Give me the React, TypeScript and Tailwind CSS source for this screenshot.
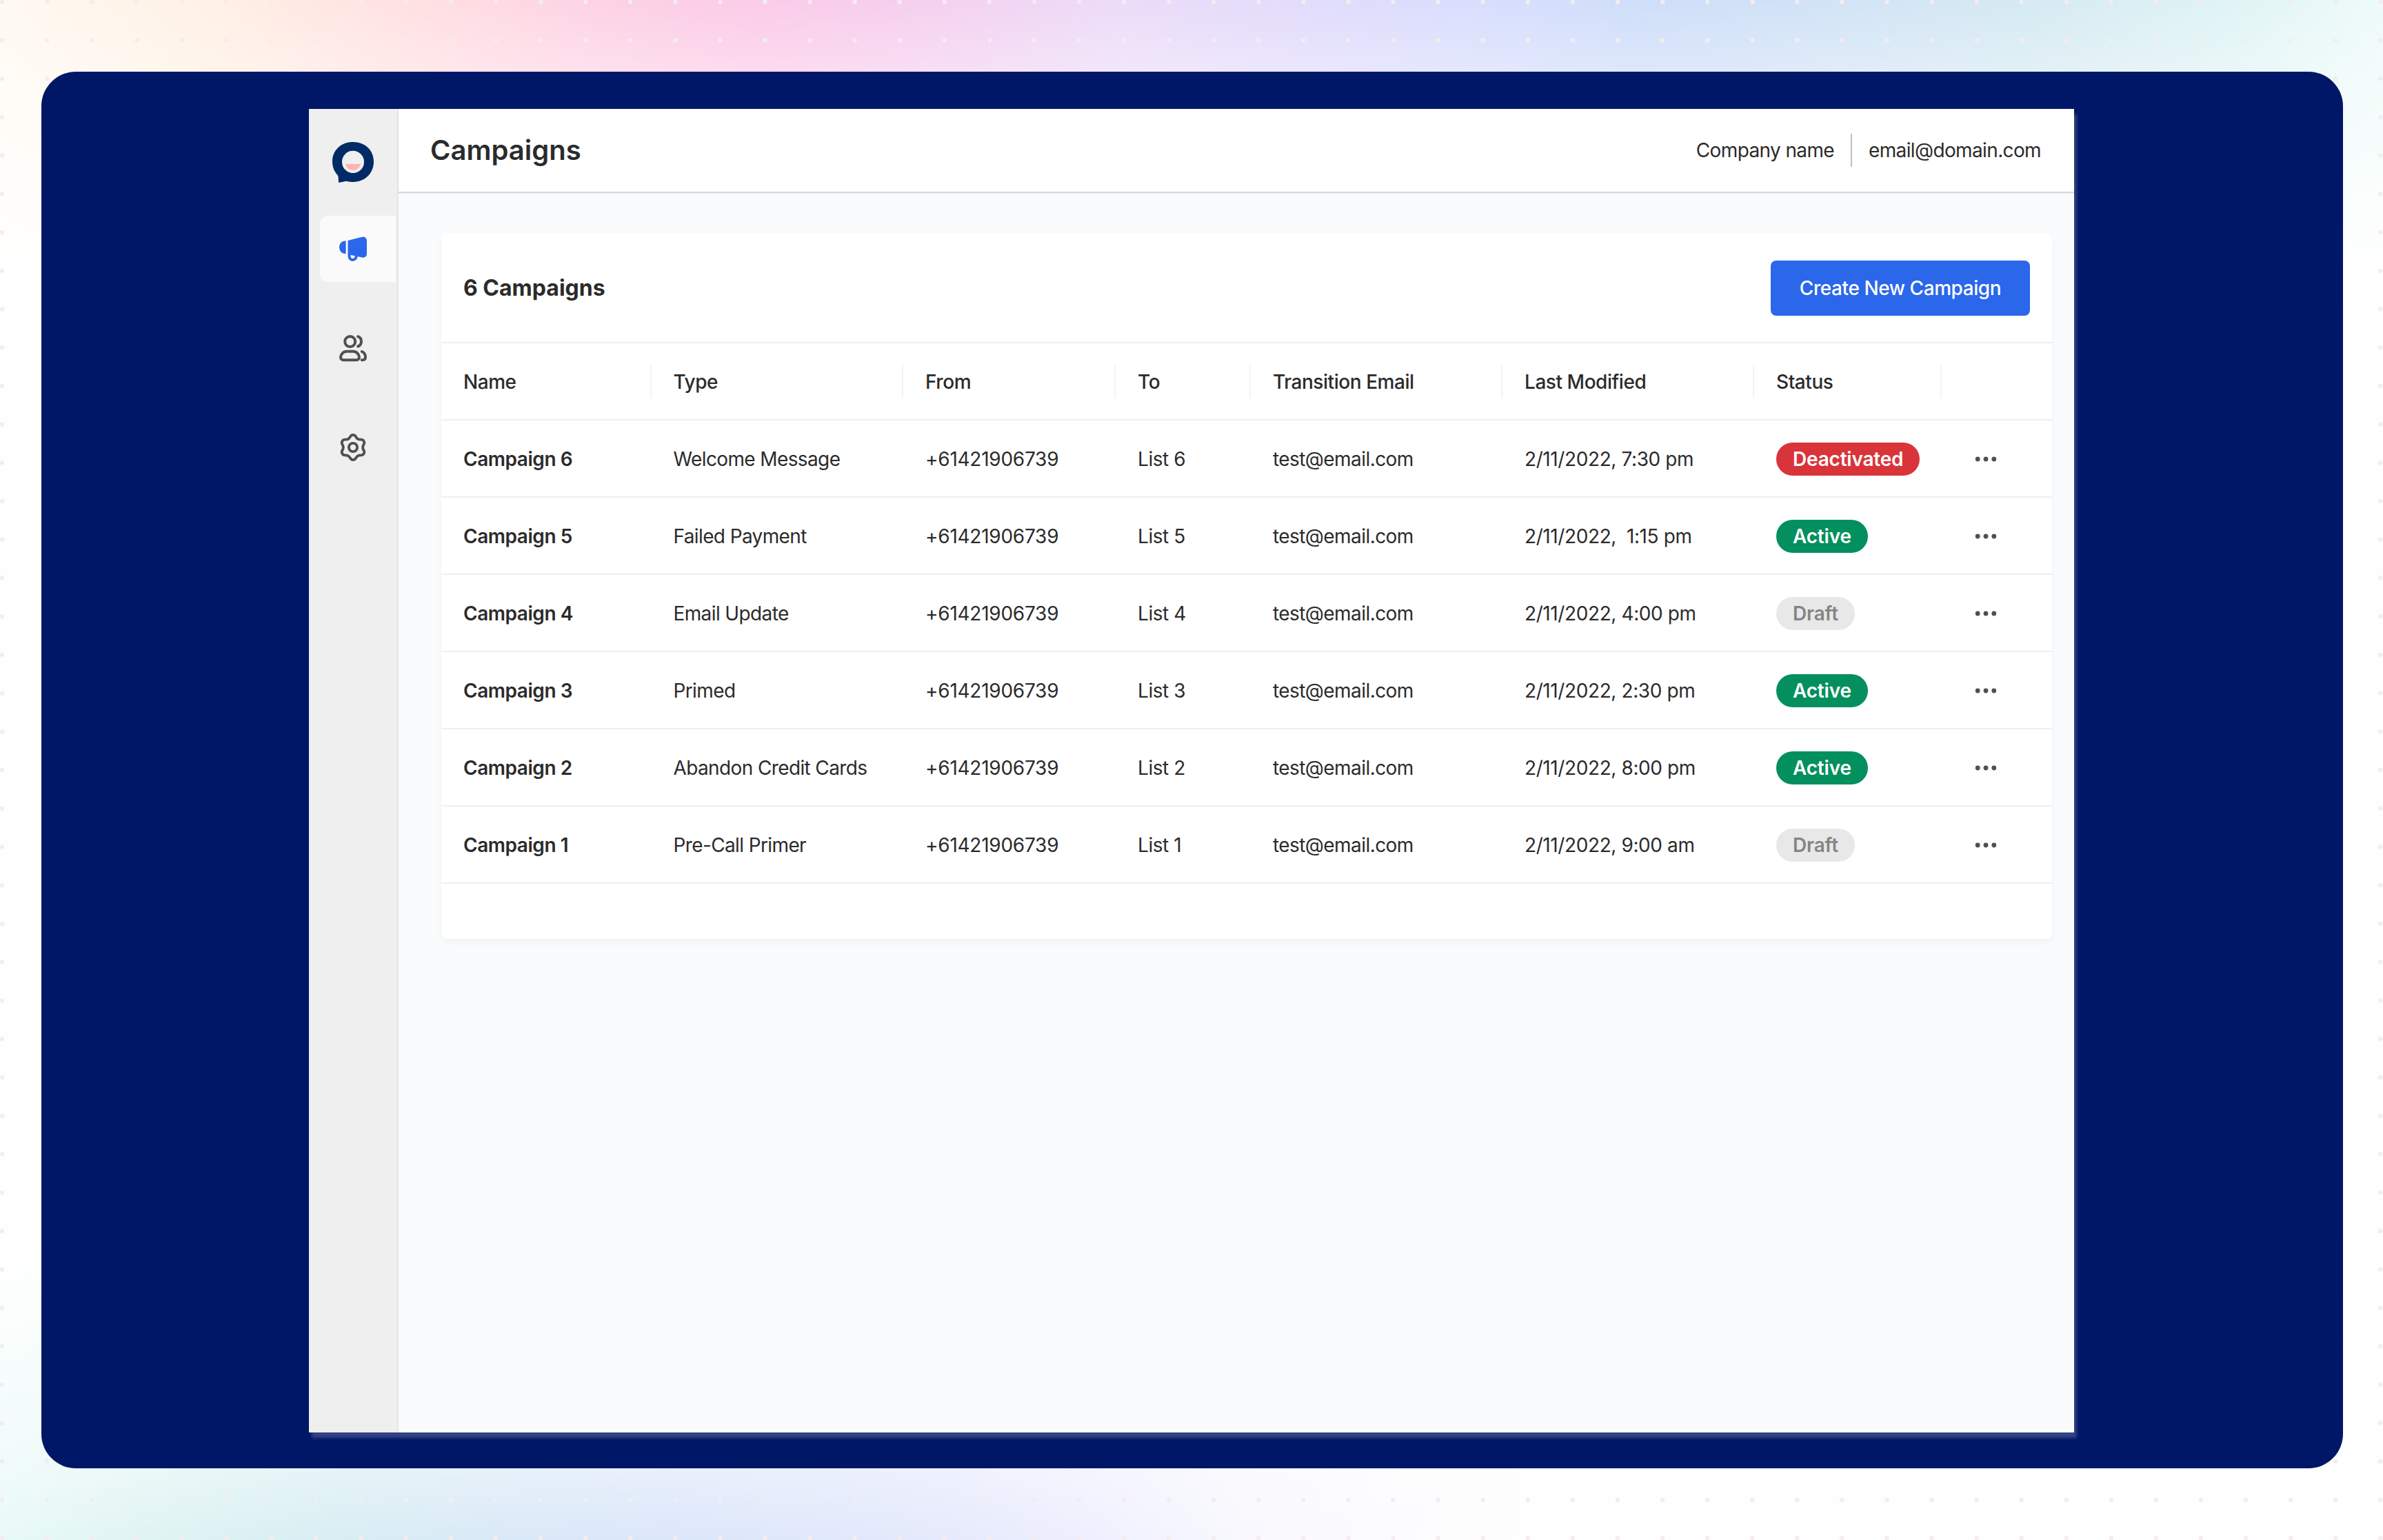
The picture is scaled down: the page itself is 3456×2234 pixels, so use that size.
import clsx from "clsx";

type Status = "Deactivated" | "Active" | "Draft";

const columns = ["Name", "Type", "From", "To", "Transition Email", "Last Modified", "Status", ""];

const campaigns: { name: string; type: string; to: string; modified: string; status: Status }[] = [
  { name: "Campaign 6", type: "Welcome Message", to: "List 6", modified: "2/11/2022, 7:30 pm", status: "Deactivated" },
  { name: "Campaign 5", type: "Failed Payment", to: "List 5", modified: "2/11/2022,  1:15 pm", status: "Active" },
  { name: "Campaign 4", type: "Email Update", to: "List 4", modified: "2/11/2022, 4:00 pm", status: "Draft" },
  { name: "Campaign 3", type: "Primed", to: "List 3", modified: "2/11/2022, 2:30 pm", status: "Active" },
  { name: "Campaign 2", type: "Abandon Credit Cards", to: "List 2", modified: "2/11/2022, 8:00 pm", status: "Active" },
  { name: "Campaign 1", type: "Pre-Call Primer", to: "List 1", modified: "2/11/2022, 9:00 am", status: "Draft" },
];

const badgeStyles: Record<Status, string> = {
  Deactivated: "bg-[#d93439] text-white",
  Active: "bg-[#048f5e] text-white",
  Draft: "bg-[#e8e8e8] text-[#858585]",
};

const rowGrid =
  "grid grid-cols-[304.5px_365.5px_308px_196px_365px_365px_272px_160px] items-center h-28 pt-0.5 border-b-2 border-[#efefef]";

const Logo = () => (
  <svg width="60" height="60" viewBox="0 0 60 60">
    <path
      fill="#002b66"
      fillRule="evenodd"
      d="M30 0C47 0 60 11.5 60 28.5C60 46 46.5 58 30 58C26.5 58 23 57.6 20 56.7L9.2 58.9L8.4 49C3 43.5 0 36.5 0 28.5C0 11.5 13 0 30 0ZM30 12.7A16 16.2 0 1 0 30 45.1A16 16.2 0 1 0 30 12.7Z"
    />
    <path fill="#ffb3b3" d="M19 32H41C39.5 37.5 35.2 41 30 41S20.5 37.5 19 32Z" />
  </svg>
);

const MegaphoneIcon = () => (
  <svg width="40" height="36" viewBox="0 0 40 36" fill="#2b67eb">
    <path d="M8.3 6.5H9.6V25.1H8.3C3.7 25.1 0 20.9 0 15.8S3.7 6.5 8.3 6.5Z" />
    <path d="M12.5 5.9L33.2.7C37 0 40 2.7 40 6.5V24.8C40 28.8 37 31.3 33.2 30.5L12.5 25.9Z" />
    <path d="M14.6 25V28.9A5 5 0 0 0 24.6 28.9V27.5" fill="none" stroke="#2b67eb" strokeWidth="4" />
  </svg>
);

const UsersIcon = () => (
  <svg width="40" height="39" viewBox="0 0 40 39" fill="none" stroke="#505050" strokeWidth="4" strokeLinecap="round">
    <circle cx="15.7" cy="9.5" r="7.5" />
    <path d="M11 23.7H20A9 9 0 0 1 29 32.3A4 4 0 0 1 25 36.3H6A4 4 0 0 1 2 32.3A9 9 0 0 1 11 23.7Z" />
    <path d="M27.2 2.2C30 3.2 32 6 32 9.3S30 15.5 27.2 16.5" />
    <path d="M32.8 24C36 25.3 38 28.6 38 32.2C38 34.6 36.4 36.3 34.2 36.3H32.8" />
  </svg>
);

const GearIcon = () => (
  <svg width="44" height="44" viewBox="-22 -22 44 44" fill="none" stroke="#505050" strokeWidth="3.8" strokeLinejoin="round">
    <path d="M-4.14 -15.45A4.6 4.6 0 0 1 4.14 -15.45A7.7 7.7 0 0 0 11.31 -11.31A4.6 4.6 0 0 1 15.45 -4.14A7.7 7.7 0 0 0 15.45 4.14A4.6 4.6 0 0 1 11.31 11.31A7.7 7.7 0 0 0 4.14 15.45A4.6 4.6 0 0 1 -4.14 15.45A7.7 7.7 0 0 0 -11.31 11.31A4.6 4.6 0 0 1 -15.45 4.14A7.7 7.7 0 0 0 -15.45 -4.14A4.6 4.6 0 0 1 -11.31 -11.31A7.7 7.7 0 0 0 -4.14 -15.45Z" />
    <circle r="6.1" />
  </svg>
);

const MoreIcon = () => (
  <svg width="32" height="8" viewBox="0 0 32 8" fill="#505050">
    <circle cx="4.2" cy="4" r="3.4" />
    <circle cx="16" cy="4" r="3.4" />
    <circle cx="27.8" cy="4" r="3.4" />
  </svg>
);

const Backdrop = () => (
  <>
    {/* Colour wash along the top */}
    <div className="absolute inset-x-0 top-0 h-[440px] bg-[linear-gradient(to_right,#fffaf2_0%,#fff0e4_9%,#ffdfe2_18%,#fdd1e5_26%,#fbcbe8_32%,#f6cfee_38%,#ecdcf8_47%,#e0dcfc_56%,#d8defd_62%,#cfdef9_69%,#d1e2f7_75%,#d6ebf2_86%,#dff3f5_93%,#eefbf9_100%)]">
      <div className="h-full bg-[linear-gradient(to_bottom,rgba(255,255,255,0)_0px,rgba(255,255,255,0.3)_104px,rgba(255,255,255,1)_400px)]" />
    </div>
    {/* Colour wash along the bottom */}
    <div className="absolute inset-x-0 bottom-0 h-[440px] bg-[linear-gradient(to_right,#e8faf7_0%,#e0f4f3_6%,#d8eef3_14%,#dae9f7_21%,#dce7fa_28%,#e0e8fb_34%,#e6eafc_40%,#eff0fe_46%,#f8f8fe_52%,#fcfcff_58%,#fefefe_64%)]">
      <div className="h-full bg-[linear-gradient(to_top,rgba(255,255,255,0)_0px,rgba(255,255,255,0.36)_104px,rgba(255,255,255,1)_420px)]" />
    </div>
    <div className="absolute inset-0 bg-[radial-gradient(circle_at_center,#f4ecee_3px,transparent_3.6px)] bg-size-[65.09px_55.72px] bg-position-[-29.4px_-25.1px]" />
  </>
);

const Sidebar = () => (
  <aside className="flex w-[130px] shrink-0 flex-col items-center border-r-2 border-[#e4e5e9] bg-[#efefef] pt-12">
    <Logo />
    <nav className="mt-[47px] flex w-full flex-col gap-12 pl-4">
      <a className="flex h-24 w-[110px] items-center rounded-l-xl bg-[#fafafa] pl-7">
        <MegaphoneIcon />
      </a>
      <a className="flex h-24 w-[110px] items-center pl-7">
        <UsersIcon />
      </a>
      <a className="flex h-24 w-[110px] items-center pl-[26px]">
        <GearIcon />
      </a>
    </nav>
  </aside>
);

const Header = () => (
  <header className="flex h-[122px] items-center justify-between border-b-2 border-[#d5d7db] bg-white pr-12 pl-[46px] shadow-[0_1px_2px_rgba(0,0,0,0.08)]">
    <h1 className="text-[40px] font-semibold">Campaigns</h1>
    <div className="flex items-center gap-6 tracking-[-0.63px]">
      <span>Company name</span>
      <span className="h-12 w-0.5 bg-[#bdbdbd]" />
      <span>email@domain.com</span>
    </div>
  </header>
);

const CampaignTable = () => (
  <div>
    <div className={clsx(rowGrid, "font-medium tracking-[-0.45px]")}>
      {columns.map((column, i) => (
        <div
          key={i}
          className={clsx("flex h-12 items-center pl-8", i < columns.length - 1 && "border-r-2 border-[#f3f3f3]")}
        >
          {column}
        </div>
      ))}
    </div>
    {campaigns.map((campaign) => (
      <div key={campaign.name} className={clsx(rowGrid, "whitespace-pre")}>
        <div className="pl-8 font-semibold tracking-[-0.45px]">{campaign.name}</div>
        <div className="pl-8 tracking-[-0.62px]">{campaign.type}</div>
        <div className="pl-8 tracking-[-0.25px]">+61421906739</div>
        <div className="pl-8 tracking-[-0.45px]">{campaign.to}</div>
        <div className="pl-8 tracking-[-0.57px]">test@email.com</div>
        <div className="pl-8 tracking-[-0.4px]">{campaign.modified}</div>
        <div className="flex pl-8 tracking-[-0.2px]">
          <span className={clsx("flex h-12 items-center rounded-full px-6 font-semibold", badgeStyles[campaign.status])}>
            {campaign.status}
          </span>
        </div>
        <div className="pl-12">
          <MoreIcon />
        </div>
      </div>
    ))}
  </div>
);

const App = () => {
  return (
    <div className="relative h-[2234px] w-[3456px] overflow-hidden bg-[#fefefe] px-[60px] pt-[104px] font-['Inter',sans-serif] text-[28px] leading-[44px] text-[#2b2b2b]">
      <Backdrop />
      <div className="relative flex h-[2026px] w-[3338px] rounded-[50px] bg-[#001666] pt-[54px] pl-[388px]">
        <div className="flex h-[1920px] w-[2560px] bg-[#fafbfd] shadow-[4px_8px_4px_rgba(250,250,250,0.2)]">
          <Sidebar />
          <div className="flex-1">
            <Header />
            <main className="pt-[58px] pr-8 pl-[62px]">
              <section className="h-[1024px] rounded-lg bg-white shadow-[0_4px_12px_rgba(0,0,0,0.04)]">
                <div className="flex h-40 items-center justify-between border-b-2 border-[#efefef] px-8 pt-0.5">
                  <h2 className="text-[32px] font-bold">6 Campaigns</h2>
                  <button className="h-20 w-[376px] rounded-lg bg-[#2b67eb] font-medium tracking-[-0.43px] text-white">
                    Create New Campaign
                  </button>
                </div>
                <CampaignTable />
              </section>
            </main>
          </div>
        </div>
      </div>
    </div>
  );
};

export default App;
